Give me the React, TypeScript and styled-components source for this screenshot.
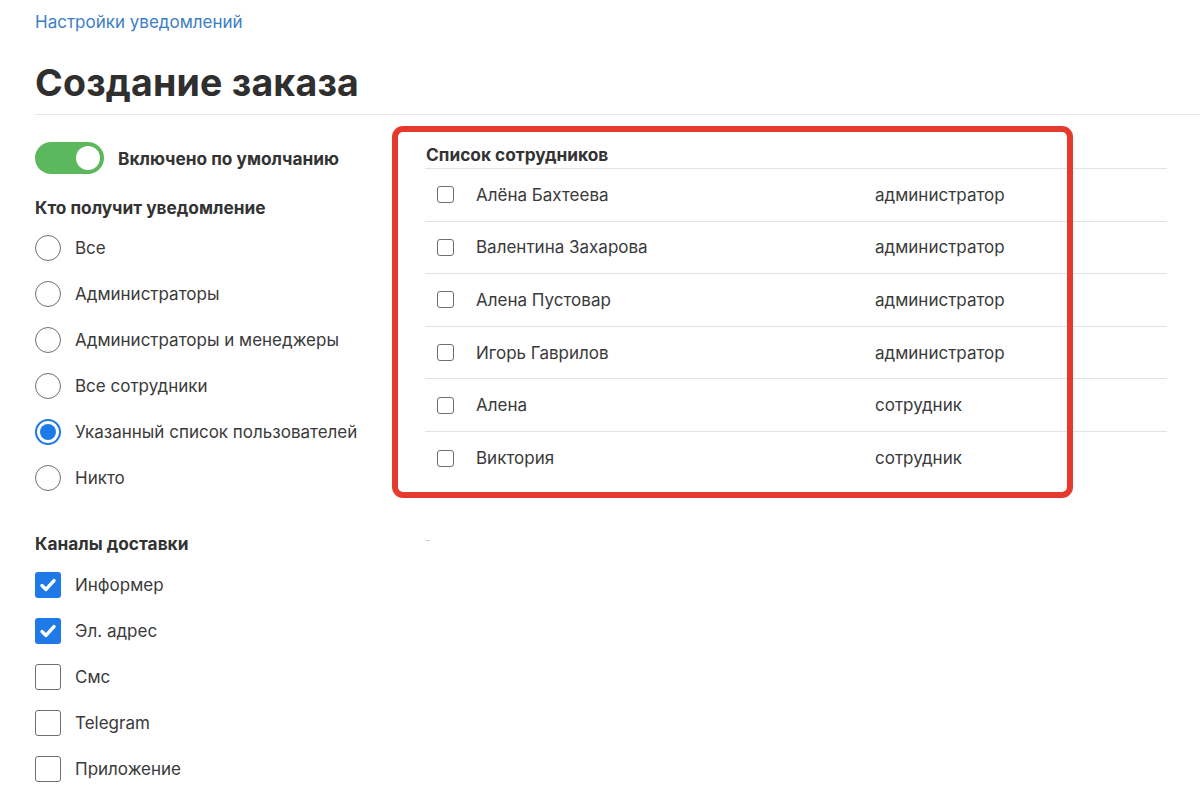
import styled, { createGlobalStyle } from "styled-components";

const GlobalStyle = createGlobalStyle`
  html, body {
    margin: 0;
    padding: 0;
    background: #ffffff;
  }
  body {
    font-family: Inter, "Open Sans", "Liberation Sans", sans-serif;
    color: #333333;
  }
  * {
    box-sizing: border-box;
  }
`;

const Page = styled.div`
  width: 1200px;
  min-height: 788px;
  padding: 11px 0 0 35px;
  overflow: hidden;
`;

const Breadcrumb = styled.a`
  display: block;
  font-size: 17px;
  line-height: 22px;
  color: #3b7ec6;
  text-decoration: none;
`;

const Title = styled.h1`
  margin: 0;
  padding: 29px 0 10px;
  font-size: 37.5px;
  line-height: 42px;
  font-weight: 700;
  letter-spacing: 0.2px;
  color: #2f2f2f;
  border-bottom: 1px solid #e6e6e6;
`;

const Columns = styled.div`
  display: grid;
  grid-template-columns: 390px 742px;
  padding-top: 13px;
`;

const LeftColumn = styled.div`
  display: flex;
  flex-direction: column;
`;

const ToggleRow = styled.div`
  display: flex;
  align-items: center;
  gap: 14px;
  height: 32px;
  margin-top: 14px;
`;

const Toggle = styled.div<{ $on: boolean }>`
  position: relative;
  width: 69px;
  height: 32px;
  border-radius: 16px;
  background: ${({ $on }) => ($on ? "#5cb85c" : "#cccccc")};

  &::after {
    content: "";
    position: absolute;
    top: 4px;
    left: ${({ $on }) => ($on ? "41px" : "4px")};
    width: 24px;
    height: 24px;
    border-radius: 50%;
    background: #ffffff;
  }
`;

const BoldLabel = styled.span`
  font-size: 17.3px;
  font-weight: 700;
  color: #333333;
`;

const SectionTitle = styled.div<{ $top: number; $bottom: number }>`
  font-size: 17.3px;
  font-weight: 700;
  line-height: 22px;
  color: #333333;
  margin-top: ${({ $top }) => $top}px;
  margin-bottom: ${({ $bottom }) => $bottom}px;
`;

const OptionList = styled.div`
  display: flex;
  flex-direction: column;
`;

const Option = styled.label`
  display: flex;
  align-items: center;
  gap: 14px;
  height: 46px;
  font-size: 17px;
  color: #3a3a3a;
`;

const Radio = styled.span<{ $checked: boolean }>`
  position: relative;
  width: 26px;
  height: 26px;
  border-radius: 50%;
  border: ${({ $checked }) =>
    $checked ? "2px solid #1f7ae8" : "1.5px solid #6e6e6e"};
  flex-shrink: 0;

  &::after {
    content: "";
    display: ${({ $checked }) => ($checked ? "block" : "none")};
    position: absolute;
    top: 3px;
    left: 3px;
    width: 16px;
    height: 16px;
    border-radius: 50%;
    background: #1f7ae8;
  }
`;

const Box = styled.span<{ $checked: boolean; $size: number }>`
  display: flex;
  align-items: center;
  justify-content: center;
  width: ${({ $size }) => $size}px;
  height: ${({ $size }) => $size}px;
  border-radius: 3px;
  border: ${({ $checked }) => ($checked ? "none" : "1.5px solid #6e6e6e")};
  background: ${({ $checked }) => ($checked ? "#1f7ae8" : "#ffffff")};
  flex-shrink: 0;
`;

const RightColumn = styled.div`
  position: relative;
  display: flex;
  flex-direction: column;
`;

const TableTitle = styled.div`
  font-size: 17.3px;
  font-weight: 700;
  line-height: 22px;
  color: #333333;
  padding: 16px 0 2px 1px;
  border-bottom: 1.5px solid #e2e2e2;
`;

const EmployeeRow = styled.div<{ $last: boolean }>`
  display: grid;
  grid-template-columns: 39px 399px 1fr;
  align-items: center;
  height: 52.6px;
  padding-left: 12px;
  font-size: 17px;
  color: #3a3a3a;
  border-bottom: ${({ $last }) => ($last ? "none" : "1.5px solid #e2e2e2")};
`;

const Dash = styled.div`
  width: 5px;
  height: 1px;
  background: #d0d0d0;
  margin-top: 55px;
`;

const Highlight = styled.div`
  position: absolute;
  top: -2px;
  left: -33px;
  width: 681px;
  height: 372px;
  border: 6px solid #e53b2f;
  border-radius: 11px;
  pointer-events: none;
`;

const Check = () => (
  <svg width="18" height="18" viewBox="0 0 18 18">
    <path
      d="M3 9.6 L7 13.4 L15 4.6"
      fill="none"
      stroke="#ffffff"
      strokeWidth="3.4"
      strokeLinecap="round"
      strokeLinejoin="round"
    />
  </svg>
);

const recipients = [
  "Все",
  "Администраторы",
  "Администраторы и менеджеры",
  "Все сотрудники",
  "Указанный список пользователей",
  "Никто",
];

const channels = [
  { name: "Информер", on: true },
  { name: "Эл. адрес", on: true },
  { name: "Смс", on: false },
  { name: "Telegram", on: false },
  { name: "Приложение", on: false },
];

const employees = [
  { name: "Алёна Бахтеева", role: "администратор" },
  { name: "Валентина Захарова", role: "администратор" },
  { name: "Алена Пустовар", role: "администратор" },
  { name: "Игорь Гаврилов", role: "администратор" },
  { name: "Алена", role: "сотрудник" },
  { name: "Виктория", role: "сотрудник" },
];

export default function App() {
  return (
    <>
      <GlobalStyle />
      <Page>
        <Breadcrumb href="#">Настройки уведомлений</Breadcrumb>
        <Title>Создание заказа</Title>
        <Columns>
          <LeftColumn>
            <ToggleRow>
              <Toggle $on />
              <BoldLabel>Включено по умолчанию</BoldLabel>
            </ToggleRow>
            <SectionTitle $top={23} $bottom={6}>
              Кто получит уведомление
            </SectionTitle>
            <OptionList>
              {recipients.map((r, i) => (
                <Option key={r}>
                  <Radio $checked={i === 4} />
                  {r}
                </Option>
              ))}
            </OptionList>
            <SectionTitle $top={32} $bottom={7}>
              Каналы доставки
            </SectionTitle>
            <OptionList>
              {channels.map((c) => (
                <Option key={c.name}>
                  <Box $checked={c.on} $size={26}>
                    {c.on && <Check />}
                  </Box>
                  {c.name}
                </Option>
              ))}
            </OptionList>
          </LeftColumn>
          <RightColumn>
            <TableTitle>Список сотрудников</TableTitle>
            {employees.map((e, i) => (
              <EmployeeRow key={e.name} $last={i === employees.length - 1}>
                <Box $checked={false} $size={17} />
                <span>{e.name}</span>
                <span>{e.role}</span>
              </EmployeeRow>
            ))}
            <Dash />
            <Highlight />
          </RightColumn>
        </Columns>
      </Page>
    </>
  );
}
